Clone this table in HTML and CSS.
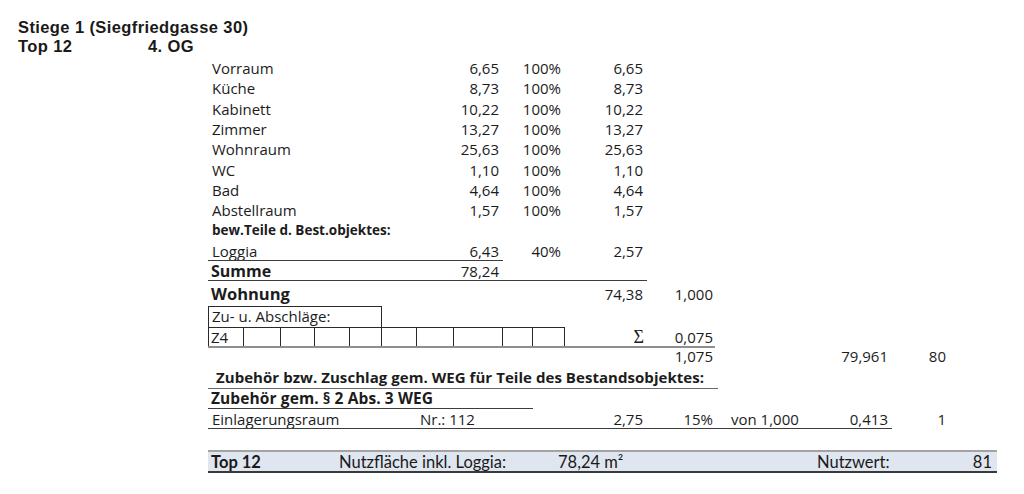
FILE: index.html
```html
<!DOCTYPE html>
<html lang="de">
<head>
<meta charset="utf-8">
<title>Top 12</title>
<link rel="stylesheet" href="styles.css">
</head>
<body>
<div class="page">
  <header class="head">
    <div class="title">Stiege 1 (Siegfriedgasse 30)</div>
    <div class="sub"><span class="sub-top">Top 12</span><span>4. OG</span></div>
  </header>

  <section class="sheet">
    <div class="row room"><span class="c-name">Vorraum</span><span class="c-area">6,65</span><span class="c-pct">100%</span><span class="c-val">6,65</span></div>
    <div class="row room"><span class="c-name">Küche</span><span class="c-area">8,73</span><span class="c-pct">100%</span><span class="c-val">8,73</span></div>
    <div class="row room"><span class="c-name">Kabinett</span><span class="c-area">10,22</span><span class="c-pct">100%</span><span class="c-val">10,22</span></div>
    <div class="row room"><span class="c-name">Zimmer</span><span class="c-area">13,27</span><span class="c-pct">100%</span><span class="c-val">13,27</span></div>
    <div class="row room"><span class="c-name">Wohnraum</span><span class="c-area">25,63</span><span class="c-pct">100%</span><span class="c-val">25,63</span></div>
    <div class="row room"><span class="c-name">WC</span><span class="c-area">1,10</span><span class="c-pct">100%</span><span class="c-val">1,10</span></div>
    <div class="row room"><span class="c-name">Bad</span><span class="c-area">4,64</span><span class="c-pct">100%</span><span class="c-val">4,64</span></div>
    <div class="row room"><span class="c-name">Abstellraum</span><span class="c-area">1,57</span><span class="c-pct">100%</span><span class="c-val">1,57</span></div>

    <div class="row sub-head"><span class="c-name small-bold">bew.Teile d. Best.objektes:</span></div>
    <div class="row room line-ab"><span class="c-name">Loggia</span><span class="c-area">6,43</span><span class="c-pct">40%</span><span class="c-val">2,57</span></div>
    <div class="row room line-ad"><span class="c-name bold">Summe</span><span class="c-area">78,24</span></div>
    <div class="row wohnung"><span class="c-name big-bold">Wohnung</span><span class="c-val">74,38</span><span class="c-fac">1,000</span></div>

    <div class="zu-box">Zu- u. Abschläge:</div>
    <div class="row z4 line-ae-gray">
      <div class="z4-cells">
        <span class="cell cell-first">Z4</span>
        <span class="cell w37"></span>
        <span class="cell w34"></span>
        <span class="cell w35"></span>
        <span class="cell w32"></span>
        <span class="cell w36"></span>
        <span class="cell w37"></span>
        <span class="cell w49"></span>
        <span class="cell w30"></span>
        <span class="cell w32"></span>
      </div>
      <span class="c-val sigma">Σ</span><span class="c-fac">0,075</span>
    </div>
    <div class="row total"><span class="c-fac">1,075</span><span class="c-nw">79,961</span><span class="c-r">80</span></div>

    <div class="row zubehoer line-ae"><span class="c-name wide-bold">Zubehör bzw. Zuschlag gem. WEG für Teile des Bestandsobjektes:</span></div>
    <div class="row room"><span class="c-name mid-bold gem">Zubehör gem. § 2 Abs. 3 WEG</span></div>
    <div class="row room line-ag"><span class="c-name">Einlagerungsraum</span><span class="c-nr">Nr.: 112</span><span class="c-val">2,75</span><span class="c-fac">15%</span><span class="c-von">von 1,000</span><span class="c-nw">0,413</span><span class="c-r">1</span></div>
  </section>

  <footer class="bar">
    <span class="bar-top">Top 12</span>
    <span class="bar-label">Nutzfläche inkl. Loggia:</span>
    <span class="bar-area">78,24 m²</span>
    <span class="bar-nw">Nutzwert:</span>
    <span class="bar-val">81</span>
  </footer>
</div>
</body>
</html>
```

FILE: styles.css
```css
* { box-sizing: border-box; }

html, body {
  margin: 0;
  padding: 0;
  background: #ffffff;
}

body {
  font-family: "Open Sans", "Noto Sans", sans-serif;
  color: #1c1c1c;
  font-size: 15px;
}

.page {
  width: 1024px;
  height: 494px;
  overflow: hidden;
}

/* header */
.head {
  padding: 18px 0 0 18px;
  font-family: "Liberation Sans", Arial, sans-serif;
  font-weight: 700;
  font-size: 16.5px;
  letter-spacing: 0.4px;
  line-height: 19px;
  color: #1a1a1a;
}

.sub {
  display: flex;
}

.sub-top {
  width: 130px;
}

/* sheet grid */
.sheet {
  margin: 2px 0 0 208px;
  width: 742px;
}

.row {
  display: grid;
  grid-template-columns: 212px 83px 62px 82px 70px 91px 84px 58px;
  align-items: center;
  height: 20.3px;
  line-height: 20px;
  white-space: nowrap;
}

.c-name { grid-column: 1; grid-row: 1; padding-left: 4px; }
.c-nr   { grid-column: 2; grid-row: 1; }
.c-area { grid-column: 2; grid-row: 1; text-align: right; padding-right: 4px; }
.c-pct  { grid-column: 3; grid-row: 1; text-align: right; padding-right: 4px; }
.c-val  { grid-column: 4; grid-row: 1; text-align: right; padding-right: 4px; }
.c-fac  { grid-column: 5; grid-row: 1; text-align: right; padding-right: 4px; }
.c-von  { grid-column: 6; grid-row: 1; padding-left: 14px; }
.c-nw   { grid-column: 7; grid-row: 1; text-align: right; padding-right: 4px; }
.c-r    { grid-column: 8; grid-row: 1; text-align: right; padding-right: 4px; }

.bold {
  font-weight: 700;
  font-size: 16px;
  padding-left: 3px;
}

.small-bold {
  font-weight: 700;
  font-size: 13.5px;
}

.big-bold {
  font-weight: 700;
  font-size: 16.5px;
  padding-left: 3px;
}

.wide-bold {
  font-weight: 700;
  font-size: 15px;
  letter-spacing: 0.05px;
  padding-left: 8px;
}

.mid-bold {
  font-weight: 700;
  font-size: 15.5px;
  letter-spacing: 0.1px;
  padding-left: 3px;
}

/* underline helpers (grid items drawn via ::after) */
.line-ab::after,
.line-ad::after,
.line-ae::after,
.line-ae-gray::after,
.line-ag::after {
  content: "";
  grid-row: 1;
  align-self: end;
  height: 0;
  border-bottom: 1px solid #3c3c3c;
}

.line-ab::after { grid-column: 1 / 3; }
.line-ad::after { grid-column: 1 / 5; }
.line-ae::after { grid-column: 1 / 6; border-bottom-color: #6a6a6a; margin-right: -1px; }
.line-ae-gray::after { grid-column: 1 / 6; border-bottom: 2px solid #8f8f8f; margin-right: 2px; }
.line-ag::after { grid-column: 1 / 8; }

.sub-head {
  height: 20px;
}

.wohnung {
  height: 24.7px;
  align-items: end;
  line-height: 24px;
}

/* Zu- u. Abschläge box */
.zu-box {
  width: 174px;
  height: 21px;
  border: 1px solid #2a2a2a;
  border-bottom: none;
  padding-left: 3px;
  line-height: 19px;
}

.z4 {
  height: 21px;
  align-items: stretch;
}

.z4-cells {
  grid-column: 1 / 4;
  grid-row: 1;
  display: flex;
  height: 20px;
  border-top: 1px solid #2a2a2a;
}

.cell {
  border-right: 1px solid #2a2a2a;
  height: 19px;
  line-height: 19px;
}

.cell-first {
  width: 36px;
  border-left: 1px solid #2a2a2a;
  padding-left: 2px;
}

.w37 { width: 37px; }
.w34 { width: 34px; }
.w35 { width: 35px; }
.w32 { width: 32px; }
.w36 { width: 36px; }
.w49 { width: 49px; }
.w30 { width: 30px; }

.z4 .c-val,
.z4 .c-fac {
  align-self: center;
}

.sigma {
  font-family: "Liberation Serif", "DejaVu Serif", serif;
  font-size: 18px;
  padding-right: 3px;
}

.total {
  height: 17px;
  line-height: 17px;
}

.zubehoer {
  height: 24px;
  align-items: end;
}

.zubehoer .c-name {
  padding-bottom: 2px;
}

.gem {
  justify-self: start;
  grid-column: 1 / 4;
  width: 325px;
  border-bottom: 1px solid #3c3c3c;
  line-height: 19px;
  align-self: stretch;
}

/* summary bar */
.bar {
  margin: 21px 0 0 208px;
  width: 789px;
  height: 23px;
  background: #dfe6ef;
  border-top: 2px solid #a3a3a3;
  border-bottom: 2px solid #3a3a3a;
  display: flex;
  align-items: center;
  font-family: "Lato", "Open Sans", sans-serif;
  font-size: 16.5px;
  color: #1a1a1a;
  padding-left: 3px;
  padding-right: 5px;
}

.bar-top {
  font-weight: 700;
  width: 128px;
}

.bar-label {
  width: 219px;
}

.bar-area {
  width: 259px;
}

.bar-nw {
  flex: 1;
}

.bar-val {
  text-align: right;
}
```
